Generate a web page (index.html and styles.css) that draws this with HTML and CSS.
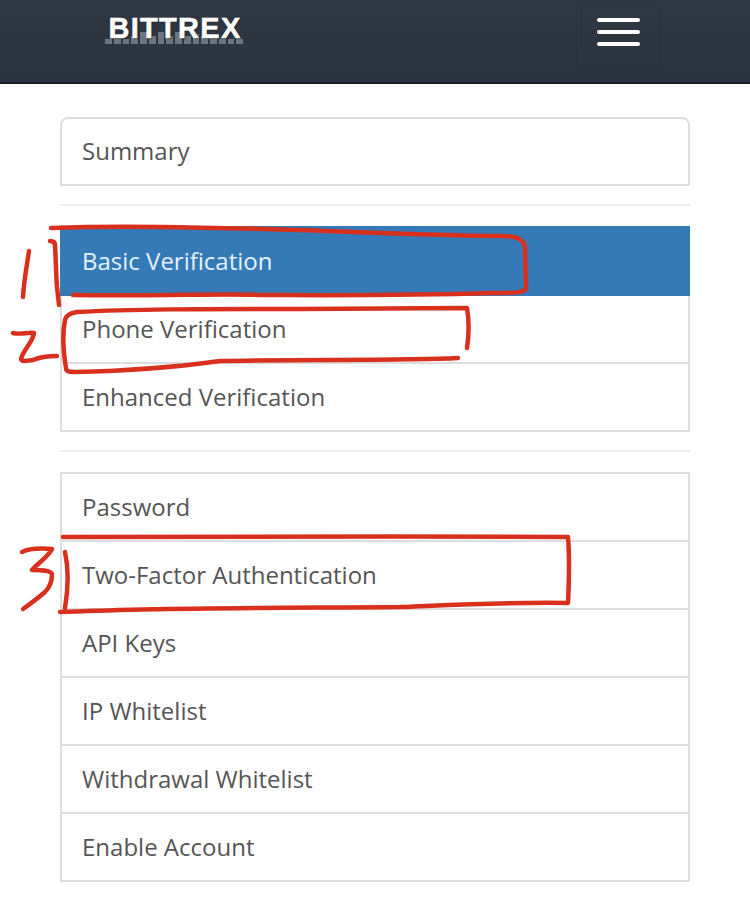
FILE: index.html
```html
<!DOCTYPE html>
<html lang="en">
<head>
<meta charset="utf-8">
<title>Bittrex account</title>
<link rel="stylesheet" href="styles.css">
</head>
<body>
<header class="topbar">
  <a class="logo">
    <span class="logo-text">BITTREX</span>
    <span class="logo-bars">
      <i class="b1"></i><i class="b1"></i><i class="b1"></i><i class="b2"></i><i class="b4"></i><i class="b2"></i><i class="b4"></i><i class="b2"></i><i class="b4"></i><i class="b2"></i><i class="b3"></i><i class="b2"></i><i class="b2"></i><i class="b1"></i><i class="b1"></i><i class="b1"></i>
    </span>
  </a>
  <button class="menu-toggle" aria-label="Menu">
    <span></span><span></span><span></span>
  </button>
</header>
<main class="content">
  <ul class="list-group rounded">
    <li>Summary</li>
  </ul>
  <hr class="divider">
  <ul class="list-group">
    <li class="active">Basic Verification</li>
    <li>Phone Verification</li>
    <li>Enhanced Verification</li>
  </ul>
  <hr class="divider">
  <ul class="list-group">
    <li>Password</li>
    <li>Two-Factor Authentication</li>
    <li>API Keys</li>
    <li>IP Whitelist</li>
    <li>Withdrawal Whitelist</li>
    <li>Enable Account</li>
  </ul>
</main>
<svg class="ink" viewBox="0 0 750 897" fill="none" stroke="#d9301e" stroke-width="4.5" stroke-linecap="round" stroke-linejoin="round">
  <path d="M51 228C130 225 220 228 300 230C380 233 440 236 500 236C515 236 524 238 525 248L526 288C525 293 515 293 490 293C400 296 300 295 260 295C230 293 170 296 73 295"/>
  <path d="M50 241C53 241 55 242 55 245C56 262 56 275 57 287L59 305"/>
  <path d="M29 251C27 265 24 280 23 297"/>
  <path d="M77 312C130 309 200 309 300 309L467 308C469 320 469 335 467 348"/>
  <path d="M458 358C400 361 300 359 220 361C170 368 120 371 75 372C68 372 66 371 66 368C63 350 62 335 65 320C66 315 70 313 77 312"/>
  <path d="M13 333C20 335 28 332 34 333C33 342 23 350 21 359C22 362 26 361 33 360C40 357 48 356 57 356"/>
  <path d="M63 537C200 537 400 536 568 537C570 560 569 580 568 603C500 602 450 605 400 607C300 608 170 607 60 612"/>
  <path d="M65 552C69 570 68 590 65 608"/>
  <path d="M22 552C28 549 40 548 52 549C48 557 38 563 32 570C40 570 50 570 52 574C52 582 50 587 45 592C38 598 30 604 23 609"/>
</svg>
</body>
</html>
```

FILE: styles.css
```css
* { box-sizing: border-box; }
html, body { margin: 0; padding: 0; }
body {
  width: 750px;
  height: 897px;
  overflow: hidden;
  background: #fff;
  font-family: "Open Sans", sans-serif;
  color: #555;
  position: relative;
}
.topbar {
  height: 84px;
  background: linear-gradient(#2e3743, #2b333e);
  border-bottom: 2px solid #1a1e25;
  display: flex;
  justify-content: space-between;
  align-items: flex-start;
  padding: 0 90px 0 105px;
}
.logo {
  display: flex;
  flex-direction: column;
  align-items: center;
  width: 138px;
  margin-top: 18px;
}
.logo-text {
  font-family: "Liberation Sans", sans-serif;
  font-weight: 700;
  font-size: 29px;
  line-height: 20px;
  letter-spacing: 1.3px;
  margin-right: -2px;
  color: #fff;
  -webkit-text-stroke: 0.5px #fff;
  text-shadow: 1px 1px 1px #1b2027;
  position: relative;
  z-index: 1;
}
.logo-bars {
  display: flex;
  align-items: flex-end;
  gap: 2px;
  height: 12px;
  margin-top: -6px;
}
.logo-bars i {
  display: block;
  width: 6.75px;
  background: #6d747d;
}
.logo-bars .b1 { height: 5px; }
.logo-bars .b2 { height: 8px; }
.logo-bars .b3 { height: 10px; }
.logo-bars .b4 { height: 12px; }
.menu-toggle {
  display: flex;
  flex-direction: column;
  gap: 8px;
  width: 84px;
  height: 62px;
  margin-top: 4px;
  padding: 13px 19px 0 20px;
  background: none;
  border: 1px solid rgba(20, 22, 28, 0.06);
}
.menu-toggle span {
  display: block;
  width: 100%;
  height: 4px;
  border-radius: 2px;
  background: #fff;
}
.content {
  padding: 33px 60px 0;
}
.list-group {
  list-style: none;
  margin: 0;
  padding: 0;
  border: 2px solid #ddd;
  background: #fff;
}
.list-group.rounded { border-radius: 8px 8px 0 0; }
.list-group li {
  height: 68px;
  padding: 16px 20px 0;
  font-size: 24px;
  line-height: 34px;
  border-top: 2px solid #ddd;
}
.list-group li:first-child { border-top: 0; height: 66px; }
.list-group.rounded li:first-child { height: 65px; padding-top: 15px; }
.list-group li.active:first-child {
  background: #337ab7;
  color: #e6f2fa;
  margin: -2px -2px 0;
  height: 70px;
  padding: 18px 22px 0;
}
.list-group li.active + li { border-top: 0; height: 66px; }
.divider {
  height: 2px;
  border: 0;
  margin: 18px 0 20px;
  background: #eee;
}
.ink {
  position: absolute;
  left: 0;
  top: 0;
  width: 750px;
  height: 897px;
  pointer-events: none;
}
```
